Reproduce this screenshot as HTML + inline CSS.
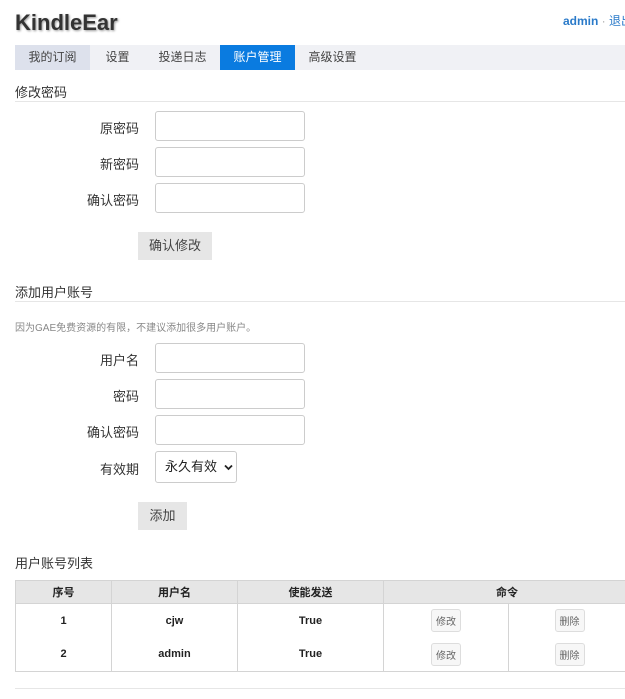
<!DOCTYPE html>
<html><head><meta charset="utf-8"><style>
*{margin:0;padding:0;box-sizing:border-box}
body{width:625px;height:699px;overflow:hidden;background:#fff;position:relative;font-family:"Liberation Sans","Noto Sans CJK SC",sans-serif;font-size:12px;color:#333}
.a{position:absolute}
.title{left:15px;top:10px;font-size:22px;font-weight:bold;color:#333;text-shadow:1px 1px 2px #999}
.nav{left:15px;top:45px;width:610px;height:25px;background:#f0f1f5}
.nav div{position:absolute;top:0;height:25px;line-height:25px;text-align:center;font-size:12px;color:#444}
.h{left:15px;font-size:13px;color:#333}
.line{left:15px;width:610px;height:1px;background:#e6e6e6}
.lbl{width:124px;left:15px;text-align:right;font-size:13px;color:#333}
.in{left:155px;width:150px;height:30px;border:1px solid #ccc;border-radius:3px;background:#fff}
.btn{background:#e6e6e6;text-align:center;font-size:13px;color:#444}
table{position:absolute;left:15px;top:580px;width:616px;border-collapse:collapse;font-size:11px}
td,th{border:1px solid #d4d4d4;text-align:center;font-weight:bold;color:#222}
th{background:#e6e6e6;height:23px;font-size:11px}
tr.r td{height:34px;border-top:none;border-bottom:none}
tr.r:last-child td{border-bottom:1px solid #d4d4d4}
.sb{display:inline-block;border:1px solid #ddd;border-radius:3px;background:#f7f7f7;font-weight:normal;font-size:10px;color:#666;padding:3px 4px}
</style></head><body>
<div class="a title">KindleEar</div>
<div class="a" style="left:563px;top:12px;font-size:12px;font-weight:bold;color:#2a7ac9;white-space:nowrap">admin <span style="color:#aaa;font-weight:normal">·</span> <span style="font-weight:normal">退出</span></div>
<div class="a nav">
<div style="left:0;width:75px;background:#dde1ec">我的订阅</div>
<div style="left:85px;width:35px">设置</div>
<div style="left:140px;width:55px">投递日志</div>
<div style="left:205px;width:75px;background:#0a7be0;color:#fff">账户管理</div>
<div style="left:290px;width:55px">高级设置</div>
</div>
<div class="a h" style="top:82px">修改密码</div>
<div class="a line" style="top:101px"></div>
<div class="a lbl" style="top:118px">原密码</div><div class="a in" style="top:111px"></div>
<div class="a lbl" style="top:154px">新密码</div><div class="a in" style="top:147px"></div>
<div class="a lbl" style="top:190px">确认密码</div><div class="a in" style="top:183px"></div>
<div class="a btn" style="left:138px;top:232px;width:74px;height:28px;line-height:28px">确认修改</div>
<div class="a h" style="top:282px">添加用户账号</div>
<div class="a line" style="top:301px"></div>
<div class="a" style="left:15px;top:319px;font-size:10px;color:#888">因为GAE免费资源的有限，不建议添加很多用户账户。</div>
<div class="a lbl" style="top:350px">用户名</div><div class="a in" style="top:343px"></div>
<div class="a lbl" style="top:386px">密码</div><div class="a in" style="top:379px"></div>
<div class="a lbl" style="top:422px">确认密码</div><div class="a in" style="top:415px"></div>
<div class="a lbl" style="top:459px">有效期</div>
<div class="a in" style="top:451px;width:82px;height:32px;font-size:13px;line-height:30px;padding-left:9px;color:#222">永久有效
<svg style="position:absolute;left:68px;top:12px" width="9" height="7" viewBox="0 0 9 7"><path d="M1 1.5L4.5 5L8 1.5" stroke="#222" stroke-width="1.8" fill="none"/></svg></div>
<div class="a btn" style="left:138px;top:502px;width:49px;height:28px;line-height:28px">添加</div>
<div class="a h" style="top:553px">用户账号列表</div>
<table>
<tr><th style="width:96px">序号</th><th style="width:126px">用户名</th><th style="width:146px">使能发送</th><th colspan="2">命令</th></tr>
<tr class="r"><td>1</td><td>cjw</td><td>True</td><td style="width:125px"><span class="sb">修改</span></td><td><span class="sb">删除</span></td></tr>
<tr class="r"><td>2</td><td>admin</td><td>True</td><td><span class="sb">修改</span></td><td><span class="sb">删除</span></td></tr>
</table>
<div class="a line" style="top:688px"></div>
</body></html>
